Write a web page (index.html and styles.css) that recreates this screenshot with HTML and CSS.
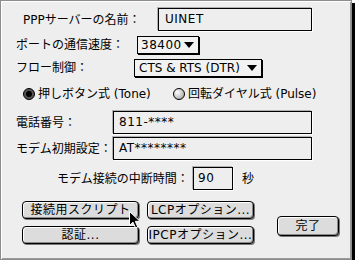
FILE: index.html
```html
<!DOCTYPE html>
<html lang="ja">
<head>
  <meta charset="UTF-8" />
  <title>PPP設定</title>
  <link rel="stylesheet" href="styles.css">
</head>
<body>
  <div class="dialog">
    <div class="row row-server">
      <span class="label">PPPサーバーの名前：</span>
      <div class="field field-wide">UINET</div>
    </div>

    <div class="row row-speed">
      <span class="label">ポートの通信速度：</span>
      <div class="popup popup-speed">
        <span>38400</span>
        <svg class="arrow" width="10" height="6" viewBox="0 0 10 6"><path d="M0 0H10L5 6Z" fill="#000"/></svg>
      </div>
    </div>

    <div class="row row-flow">
      <span class="label">フロー制御：</span>
      <div class="popup popup-flow">
        <span>CTS &amp; RTS (DTR)</span>
        <svg class="arrow" width="10" height="6" viewBox="0 0 10 6"><path d="M0 0H10L5 6Z" fill="#000"/></svg>
      </div>
    </div>

    <div class="row row-radio">
      <label class="radio radio-tone">
        <svg width="12" height="12" viewBox="0 0 12 12">
          <circle cx="6" cy="6" r="5.5" fill="#555" stroke="#000"/>
          <circle cx="6" cy="6" r="3" fill="#000"/>
        </svg>
        <span>押しボタン式 (Tone)</span>
      </label>
      <label class="radio">
        <svg width="12" height="12" viewBox="0 0 12 12">
          <defs>
            <radialGradient id="rg" cx="0.35" cy="0.35" r="0.7">
              <stop offset="0" stop-color="#fff"/>
              <stop offset="1" stop-color="#aaa"/>
            </radialGradient>
          </defs>
          <circle cx="6" cy="6" r="5.5" fill="url(#rg)" stroke="#000"/>
        </svg>
        <span>回転ダイヤル式 (Pulse)</span>
      </label>
    </div>

    <div class="row row-phone">
      <span class="label">電話番号：</span>
      <div class="field field-long">811-****</div>
    </div>

    <div class="row row-init">
      <span class="label">モデム初期設定：</span>
      <div class="field field-long">AT********</div>
    </div>

    <div class="row row-timeout">
      <span class="label">モデム接続の中断時間：</span>
      <div class="field field-short">90</div>
      <span class="unit">秒</span>
    </div>

    <div class="buttons">
      <div class="col col-left">
        <button class="btn">接続用スクリプト</button>
        <button class="btn">認証...</button>
      </div>
      <div class="col col-mid">
        <button class="btn">LCPオプション...</button>
        <button class="btn">IPCPオプション...</button>
      </div>
      <button class="btn btn-done">完了</button>
    </div>

    <svg class="cursor" width="12" height="18" viewBox="0 0 12 18">
      <path d="M0.5 0.5V14.5L4 11.2L6.6 17L8.8 16L6.3 10.3H11Z" fill="#000" stroke="#fff" stroke-width="1"/>
    </svg>
  </div>
</body>
</html>
```

FILE: styles.css
```css
body {
  margin: 0;
  background: #fff;
  font-family: "DejaVu Sans", "Noto Sans CJK JP", sans-serif;
  font-size: 12px;
  color: #000;
}

.dialog {
  position: relative;
  width: 352px;
  height: 260px;
  box-sizing: border-box;
  background: #eeeeee;
  border: 1px solid #8c8c8c;
  box-shadow: inset 1px 1px 0 #fff, inset -1px -1px 0 #9a9a9a, 3px 3px 0 #000;
}

.row {
  display: flex;
  align-items: center;
  line-height: 14px;
}

.label {
  flex: none;
  white-space: nowrap;
}

/* rows */
.row-server {
  margin-top: 7px;
  padding-left: 22px;
}
.row-server .label { width: 135px; }

.row-speed {
  margin-top: 5px;
  padding-left: 15px;
}
.row-speed .label { width: 121px; }

.row-flow {
  margin-top: 5px;
  padding-left: 15px;
}
.row-flow .label { width: 118px; }

.row-radio {
  margin-top: 10px;
  padding-left: 22px;
  height: 14px;
}

.row-phone {
  margin-top: 10px;
  padding-left: 15px;
}
.row-phone .label,
.row-init .label { width: 97px; }

.row-init {
  margin-top: 3px;
  padding-left: 15px;
}

.row-timeout {
  margin-top: 7px;
  padding-left: 56px;
}
.row-timeout .label { width: 136px; }

/* fields */
.field {
  box-sizing: border-box;
  height: 23px;
  border: 1px solid #000;
  background: #eeeeee;
  box-shadow: 1px 1px 0 #fff, -1px -1px 0 #b0b0b0;
  padding: 3px 6px 0;
  letter-spacing: 0.5px;
  white-space: nowrap;
}
.field-wide { width: 154px; }
.field-long { width: 199px; padding-left: 5px; }
.field-short { width: 40px; padding-left: 4px; }

.unit { margin-left: 9px; }

/* popups */
.popup {
  box-sizing: border-box;
  height: 18px;
  display: flex;
  align-items: center;
  justify-content: space-between;
  border: 1px solid #000;
  background: #f2f2f2;
  box-shadow: 1px 1px 0 #000;
  padding: 0 4px 0 3px;
  white-space: nowrap;
}
.popup-speed { width: 62px; letter-spacing: 0.5px; }
.popup-flow { width: 128px; padding-left: 4px; }
.popup .arrow { flex: none; }

/* radios */
.radio {
  display: flex;
  align-items: center;
  gap: 3px;
  white-space: nowrap;
}
.radio svg { flex: none; }
.radio-tone { width: 150px; }

/* buttons */
.buttons {
  display: flex;
  margin-top: 11px;
  padding-left: 21px;
}

.col {
  display: flex;
  flex-direction: column;
  gap: 7px;
}

.col-left .btn { width: 117px; }
.col-mid { margin-left: 8px; }
.col-mid .btn { width: 107px; }

.btn {
  box-sizing: border-box;
  height: 18px;
  padding: 0;
  font: inherit;
  color: #000;
  line-height: 14px;
  border: 1px solid #000;
  border-radius: 4px;
  background: #dcdcdc;
  box-shadow: inset 1px 1px 0 #fff, inset -1px -1px 0 #8a8a8a, 1px 1px 0 #777;
  letter-spacing: 0.5px;
  white-space: nowrap;
}

.btn-done {
  width: 62px;
  height: 20px;
  margin-left: 23px;
  margin-top: 15px;
}

.cursor {
  position: absolute;
  left: 128px;
  top: 210px;
}
```
